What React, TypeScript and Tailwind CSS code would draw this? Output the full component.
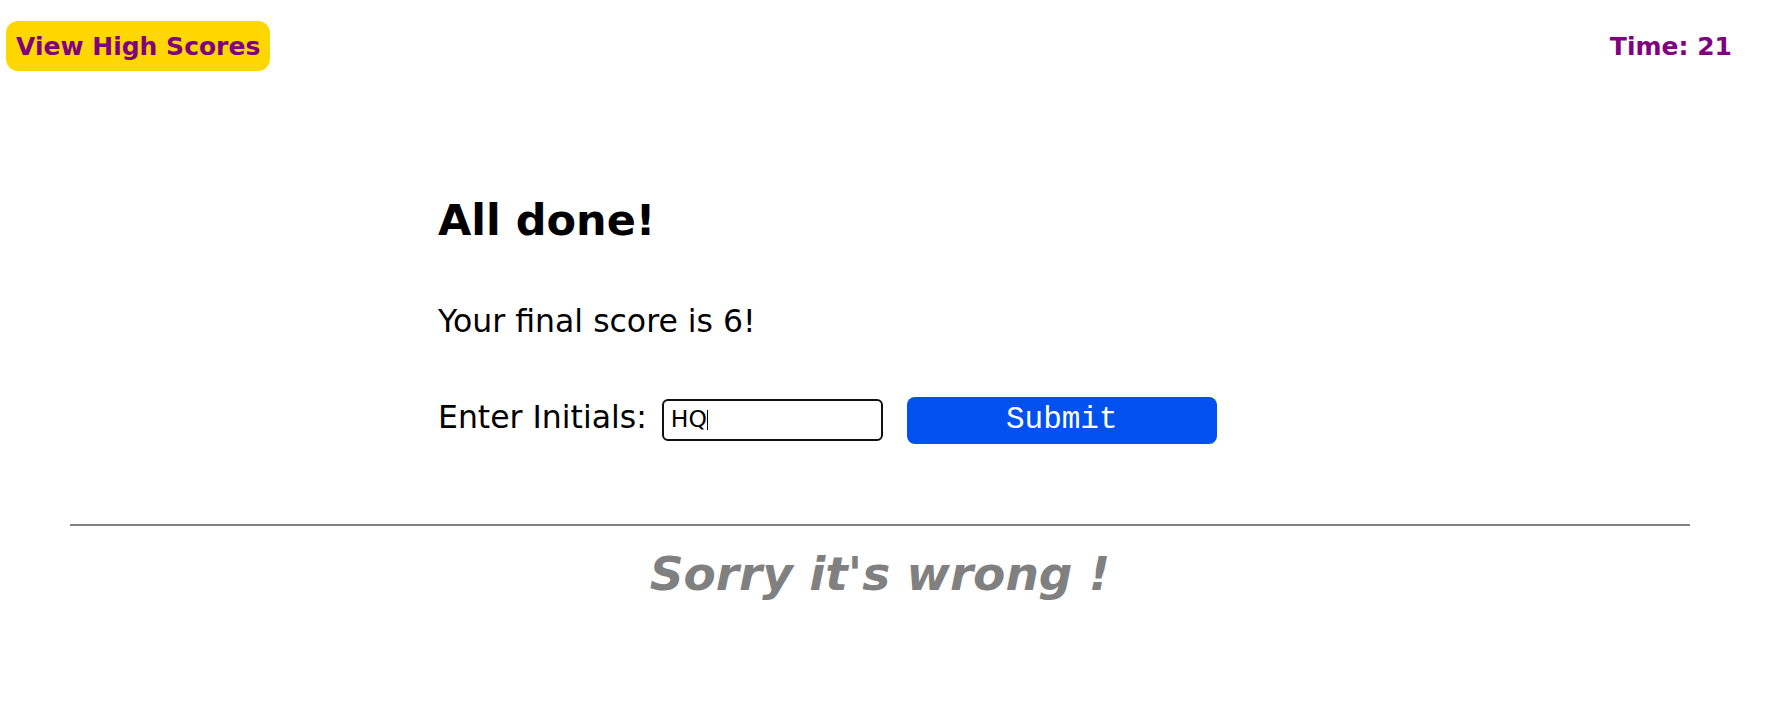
export default function App() {
  const score = 6;
  const timeLeft = 21;

  return (
    <div className="min-h-screen bg-white text-black font-['DejaVu_Sans',Verdana,sans-serif]">
      {/* Top bar */}
      <header className="flex items-center justify-between pl-[6px] pr-[51px] pt-[21px]">
        <button className="h-[50px] px-[10px] rounded-[12px] bg-[#ffd700] text-[#800080] text-[25px] font-bold leading-none">
          View High Scores
        </button>
        <div className="text-[#800080] text-[25px] font-bold leading-none">
          Time: {timeLeft}
        </div>
      </header>

      {/* End of quiz */}
      <main className="w-[907px] mx-auto">
        <h1 className="mt-[125px] text-[43px] leading-[48px] font-bold">
          All done!
        </h1>
        <p className="mt-[59px] text-[31.5px] leading-[36px]">
          Your final score is {score}!
        </p>
        <div className="mt-[58px] flex items-start h-[47px]">
          <label className="mt-[2px] text-[31.5px] leading-[36px]">
            Enter Initials:
          </label>
          <div className="mt-[2px] ml-[15px] w-[221px] h-[42px] flex items-center px-[7px] border-2 border-[#101010] rounded-[6px] text-[23.5px]">
            <span>HQ</span>
            <span className="w-px h-[20px] bg-black" />
          </div>
          <button className="ml-[24px] w-[310px] h-[47px] rounded-[8px] bg-[#0051ef] text-white text-[31px] font-['Liberation_Mono',monospace]">
            Submit
          </button>
        </div>
      </main>

      {/* Answer feedback */}
      <div className="mx-[70px] w-[1620px]">
        <hr className="mt-[80px] border-0 h-[2px] bg-[#808080]" />
        <p className="mt-[21px] text-center text-[47px] leading-[54px] font-bold italic text-[#808080]">
          Sorry it's wrong !
        </p>
      </div>
    </div>
  );
}
